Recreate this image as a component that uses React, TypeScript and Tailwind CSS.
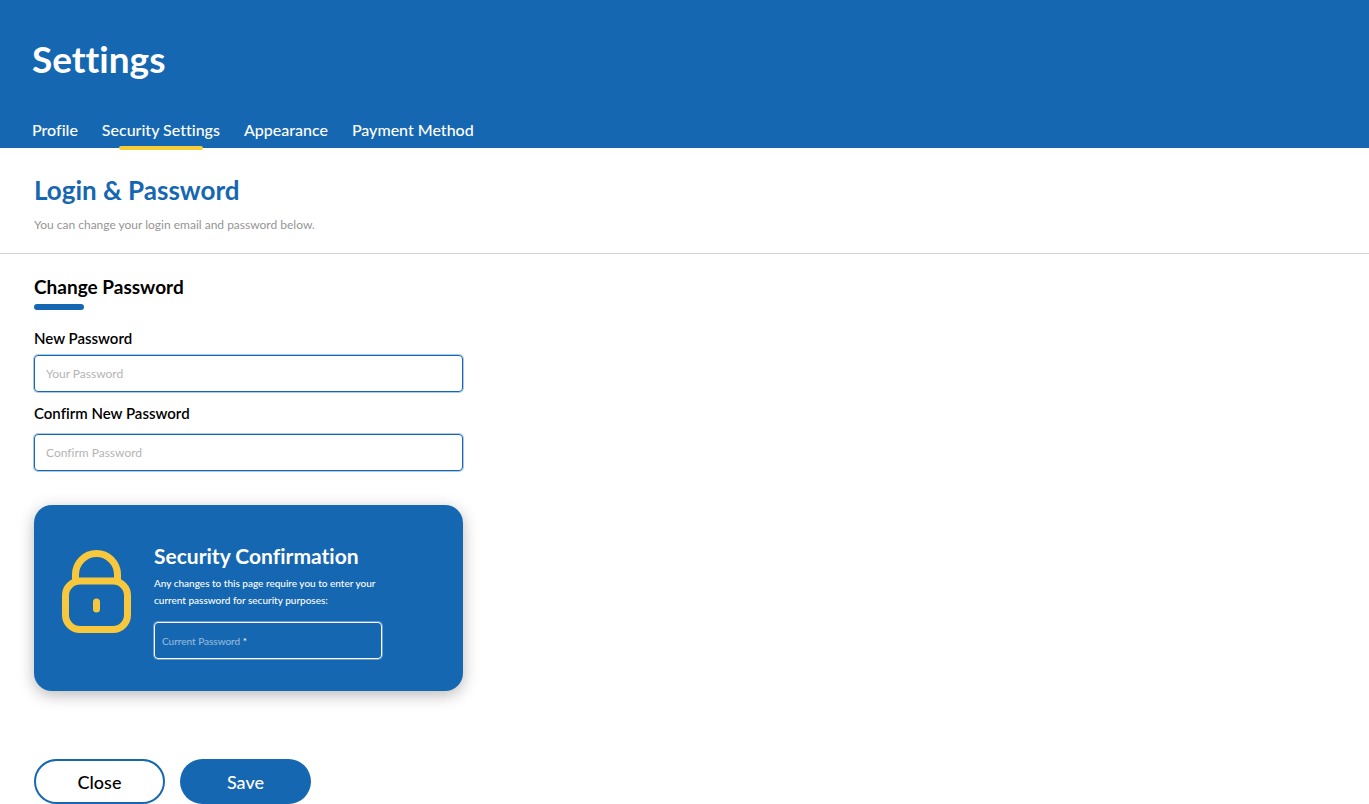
import React from 'react';

const tabs = ['Profile', 'Security Settings', 'Appearance', 'Payment Method'];

function LockIcon() {
  return (
    <svg
      className="mt-[45px] h-[83px] w-[69px] shrink-0"
      viewBox="0 0 69 83"
      fill="none"
      stroke="#f7c83e"
      strokeWidth="7"
      aria-hidden="true"
    >
      <path d="M13.5 31V24.5a21 21 0 0 1 42 0V31" />
      <rect x="3.5" y="31" width="62" height="48.5" rx="14.5" />
      <rect x="31" y="48.5" width="7" height="14" rx="3.5" fill="#f7c83e" stroke="none" />
    </svg>
  );
}

type FieldProps = { id: string; label: string; placeholder: string; gap: string };

function Field({ id, label, placeholder, gap }: FieldProps) {
  return (
    <div className={`flex flex-col ${gap}`}>
      <label htmlFor={id} className="text-[15px] leading-6 font-semibold text-black">
        {label}
      </label>
      <input
        id={id}
        type="password"
        placeholder={placeholder}
        className="h-[37px] w-full rounded-sm border border-[#1667b1] px-[11px] text-xs ring-1 ring-[#1667b1]/35 outline-none placeholder:text-[#b4b4b4]"
      />
    </div>
  );
}

export default function App() {
  return (
    <div className="min-h-screen bg-white font-['Lato','Noto_Sans',sans-serif] [font-variant-ligatures:none]">
      <header className="bg-[#1667b1] px-8 pt-[35px] text-white">
        <h1 className="text-[37px] leading-12 font-bold">Settings</h1>
        <nav className="mt-[35px] flex gap-6">
          {tabs.map((tab) => (
            <a key={tab} href="#" className="relative h-[30px] text-base leading-6 font-medium">
              {tab}
              {tab === 'Security Settings' && (
                <span className="absolute inset-x-[17px] -bottom-0.5 h-1 rounded-sm bg-[#f9cd35]" />
              )}
            </a>
          ))}
        </nav>
      </header>

      <main>
        <section className="border-b border-[#d4d4d4] px-[34px] pt-[26px] pb-[19px]">
          <h2 className="text-[26px] leading-8 font-bold text-[#1667b1]">Login &amp; Password</h2>
          <p className="mt-2.5 text-xs leading-[18px] text-[#959595]">
            You can change your login email and password below.
          </p>
        </section>

        <form className="px-[34px] pt-[19px]" onSubmit={(e) => e.preventDefault()}>
          <div className="max-w-[429px]">
            <h3 className="text-[19px] leading-7 font-bold text-black">Change Password</h3>
            <div className="mt-[3px] h-1.5 w-[50px] rounded-full bg-[#1667b1]" />

            <div className="mt-4 flex flex-col gap-[9px]">
              <Field id="new-password" label="New Password" placeholder="Your Password" gap="gap-[5px]" />
              <Field id="confirm-password" label="Confirm New Password" placeholder="Confirm Password" gap="gap-[9px]" />
            </div>

            <section className="mt-[34px] flex gap-[23px] rounded-[18px] bg-[#1667b1] pr-8 pb-8 pl-7 text-white shadow-[0_4px_16px_rgba(0,0,0,0.28)]">
              <LockIcon />
              <div className="flex w-[228px] flex-col pt-[37px]">
                <h3 className="text-[21px] leading-7 font-bold whitespace-nowrap">Security Confirmation</h3>
                <p className="mt-[5px] text-[10px] leading-[17px] font-medium whitespace-nowrap">
                  Any changes to this page require you to enter your
                  <br />
                  current password for security purposes:
                </p>
                <div className="relative mt-[13px]">
                  <input
                    id="current-password"
                    type="password"
                    placeholder=" "
                    required
                    className="peer block h-[37px] w-full rounded-sm border border-white bg-transparent px-2 text-[10px] ring-1 ring-white/35 outline-none"
                  />
                  <label
                    htmlFor="current-password"
                    className="invisible absolute top-[11px] left-2 text-[10px] leading-4 text-white/55 peer-placeholder-shown:visible"
                  >
                    Current Password <span className="text-white">*</span>
                  </label>
                </div>
              </div>
            </section>
          </div>

          <div className="mt-[68px] flex gap-[15px]">
            <button
              type="button"
              className="h-[45px] w-[131px] rounded-full border-2 border-[#1667b1] bg-white text-lg leading-6 font-medium text-black"
            >
              Close
            </button>
            <button
              type="submit"
              className="h-[45px] w-[131px] rounded-full bg-[#1667b1] text-lg leading-6 font-medium text-white"
            >
              Save
            </button>
          </div>
        </form>
      </main>
    </div>
  );
}
